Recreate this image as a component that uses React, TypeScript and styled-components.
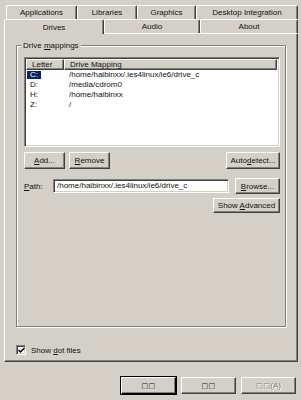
import React from "react";
import styled, { createGlobalStyle, css } from "styled-components";

const FACE = "#d4d0c8";
const SHADOW = "#808080";
const DARK = "#404040";
const LIGHT = "#ffffff";

const GlobalStyle = createGlobalStyle`
  html, body { margin: 0; padding: 0; background: ${FACE}; }
  body {
    font-family: "Liberation Sans", Arial, sans-serif;
    font-size: 8px;
    color: #111;
  }
  * { box-sizing: border-box; }
`;

const Dialog = styled.div`
  width: 301px;
  height: 400px;
  padding: 5px 3px 0 4px;
  display: flex;
  flex-direction: column;
`;

const TabRow = styled.div<{ $indent?: number }>`
  display: flex;
  height: 14px;
  margin-left: ${(p) => p.$indent || 0}px;
`;

const Tab = styled.div<{ $w: number; $active?: boolean }>`
  width: ${(p) => p.$w}px;
  height: 14px;
  display: flex;
  align-items: center;
  justify-content: center;
  background: ${FACE};
  border-top: 1px solid ${LIGHT};
  border-left: 1px solid ${LIGHT};
  border-right: 1px solid ${DARK};
  box-shadow: inset -1px 0 ${SHADOW};
  border-radius: 2px 2px 0 0;
  ${(p) =>
    p.$active &&
    css`
      height: 15px;
      margin-bottom: -1px;
      position: relative;
      z-index: 1;
    `}
`;

const Panel = styled.div`
  width: 294px;
  height: 329px;
  border-top: 1px solid ${LIGHT};
  border-left: 1px solid ${LIGHT};
  border-right: 1px solid ${DARK};
  border-bottom: 1px solid ${DARK};
  box-shadow: inset -1px -1px ${SHADOW};
  padding: 7px 11px 5px 11px;
  display: flex;
  flex-direction: column;
`;

const Group = styled.fieldset`
  margin: 0;
  padding: 7px 5px 0 7px;
  min-width: 0;
  height: 286px;
  border: 1px solid ${SHADOW};
  box-shadow: inset 1px 1px ${LIGHT}, 1px 1px ${LIGHT};
`;

const GroupTitle = styled.legend`
  padding: 0 2px;
  margin-left: -3px;
  line-height: 9px;
  background: ${FACE};
`;

const Key = styled.span`
  text-decoration: underline;
`;

const ListView = styled.div`
  height: 90px;
  background: #fff;
  border: 1px solid;
  border-color: ${SHADOW} ${LIGHT} ${LIGHT} ${SHADOW};
  box-shadow: inset 1px 1px ${DARK}, inset -1px -1px ${FACE};
  padding: 1px 2px 2px 1px;
  overflow: hidden;
`;

const Columns = styled.div`
  display: grid;
  grid-template-columns: 38px 1fr;
`;

const HeaderCell = styled.div`
  height: 11px;
  line-height: 10px;
  padding-left: 5px;
  background: ${FACE};
  border-top: 1px solid ${LIGHT};
  border-left: 1px solid ${LIGHT};
  border-right: 1px solid ${DARK};
  border-bottom: 1px solid ${DARK};
  box-shadow: inset -1px -1px ${SHADOW};
  white-space: nowrap;
`;

const Cell = styled.div<{ $pad: number }>`
  height: 10px;
  line-height: 10px;
  padding-left: ${(p) => p.$pad}px;
  white-space: nowrap;
  display: flex;
  align-items: center;
`;

const Label = styled.span<{ $selected?: boolean }>`
  padding: 0 3px;
  line-height: 8px;
  ${(p) =>
    p.$selected &&
    css`
      background: #0a246a;
      color: #fff;
    `}
`;

const Button = styled.button<{ $w: number; $h?: number; $default?: boolean }>`
  width: ${(p) => p.$w}px;
  height: ${(p) => p.$h || 17}px;
  line-height: ${(p) => (p.$h || 17) - 3}px;
  padding: 0;
  margin: 0;
  font: inherit;
  color: #111;
  background: ${FACE};
  border: 1px solid;
  border-color: ${LIGHT} ${DARK} ${DARK} ${LIGHT};
  box-shadow: inset -1px -1px ${SHADOW};
  text-align: center;
  white-space: nowrap;
  ${(p) =>
    p.$default &&
    css`
      outline: 1px solid #000;
      outline-offset: 0;
      border-color: ${LIGHT} #000 #000 ${LIGHT};
    `}
  &:disabled {
    color: ${SHADOW};
    text-shadow: 1px 1px ${LIGHT};
  }
`;

const ButtonRow = styled.div`
  display: flex;
  gap: 4px;
  margin-top: 5px;
`;

const Spacer = styled.div`
  flex: 1;
`;

const PathRow = styled.div`
  display: flex;
  align-items: center;
  margin-top: 9px;
`;

const FieldLabel = styled.label`
  width: 29px;
`;

const TextBox = styled.div`
  width: 176px;
  height: 14px;
  line-height: 10px;
  background: #fff;
  border: 1px solid;
  border-color: ${SHADOW} ${LIGHT} ${LIGHT} ${SHADOW};
  box-shadow: inset 1px 1px ${DARK}, inset -1px -1px ${FACE};
  padding: 1px 3px;
  margin-right: 6px;
  white-space: nowrap;
  overflow: hidden;
`;

const RightRow = styled.div`
  display: flex;
  justify-content: flex-end;
  margin-top: 4px;
`;

const CheckRow = styled.div`
  margin-top: auto;
  display: flex;
  align-items: center;
  gap: 5px;
  padding-bottom: 1px;
`;

const CheckBox = styled.span`
  width: 10px;
  height: 10px;
  background: #fff;
  border: 1px solid;
  border-color: ${SHADOW} ${LIGHT} ${LIGHT} ${SHADOW};
  box-shadow: inset 1px 1px ${DARK}, inset -1px -1px ${FACE};
  display: flex;
  align-items: center;
  justify-content: center;
`;

const Footer = styled.div`
  display: flex;
  justify-content: flex-end;
  gap: 5px;
  margin-top: 15px;
  padding-right: 2px;
`;

const Tofu = styled.span`
  font-family: "DejaVu Sans", sans-serif;
  font-size: 7px;
  letter-spacing: 0.5px;
`;

const drives = [
  { letter: "C:", path: "/home/haibinxx/.ies4linux/ie6/drive_c" },
  { letter: "D:", path: "/media/cdrom0" },
  { letter: "H:", path: "/home/haibinxx" },
  { letter: "Z:", path: "/" },
];

export default function App() {
  return (
    <>
      <GlobalStyle />
      <Dialog>
        <TabRow $indent={2}>
          <Tab $w={71}>Applications</Tab>
          <Tab $w={60}>Libraries</Tab>
          <Tab $w={59}>Graphics</Tab>
          <Tab $w={102}>Desktop Integration</Tab>
        </TabRow>
        <TabRow>
          <Tab $w={100} $active>
            Drives
          </Tab>
          <Tab $w={96}>Audio</Tab>
          <Tab $w={98}>About</Tab>
        </TabRow>
        <Panel>
          <Group>
            <GroupTitle>
              Drive <Key>m</Key>appings
            </GroupTitle>
            <ListView>
              <Columns>
                <HeaderCell>Letter</HeaderCell>
                <HeaderCell>Drive Mapping</HeaderCell>
                {drives.map((d, i) => (
                  <React.Fragment key={d.letter}>
                    <Cell $pad={1}>
                      <Label $selected={i === 0}>{d.letter}</Label>
                    </Cell>
                    <Cell $pad={5}>{d.path}</Cell>
                  </React.Fragment>
                ))}
              </Columns>
            </ListView>
            <ButtonRow>
              <Button $w={41}>
                <Key>A</Key>dd...
              </Button>
              <Button $w={41}>
                <Key>R</Key>emove
              </Button>
              <Spacer />
              <Button $w={54}>
                Auto<Key>d</Key>etect...
              </Button>
            </ButtonRow>
            <PathRow>
              <FieldLabel>
                <Key>P</Key>ath:
              </FieldLabel>
              <TextBox>/home/haibinxx/.ies4linux/ie6/drive_c</TextBox>
              <Button $w={45} $h={16}>
                <Key>B</Key>rowse...
              </Button>
            </PathRow>
            <RightRow>
              <Button $w={67} $h={15}>
                Show <Key>A</Key>dvanced
              </Button>
            </RightRow>
          </Group>
          <CheckRow>
            <CheckBox>
              <svg width="7" height="7" viewBox="0 0 7 7">
                <path d="M0.5 3 L2.5 5 L6.5 1" fill="none" stroke="#000" strokeWidth="1.5" />
              </svg>
            </CheckBox>
            <span>
              Show <Key>d</Key>ot files
            </span>
          </CheckRow>
        </Panel>
        <Footer>
          <Button $w={55} $default>
            <Tofu>□□</Tofu>
          </Button>
          <Button $w={55}>
            <Tofu>□□</Tofu>
          </Button>
          <Button $w={55} disabled>
            <Tofu>□□</Tofu>(A)
          </Button>
        </Footer>
      </Dialog>
    </>
  );
}
